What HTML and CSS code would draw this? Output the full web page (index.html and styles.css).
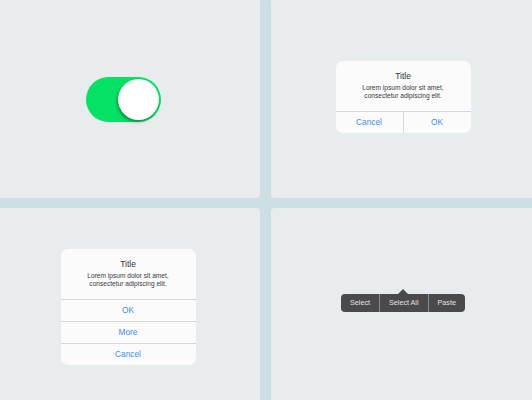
FILE: index.html
```html
<!DOCTYPE html>
<html>
<head>
<meta charset="utf-8">
<link rel="stylesheet" href="styles.css">
</head>
<body>
<div class="board">
  <div class="panel">
    <div class="toggle"><div class="knob"></div></div>
  </div>
  <div class="panel">
    <div class="dialog">
      <div class="dialog-head">
        <div class="dialog-title">Title</div>
        <div class="dialog-body">Lorem ipsum dolor sit amet,<br>consectetur adipiscing elit.</div>
      </div>
      <div class="dialog-row">
        <div class="dialog-btn">Cancel</div>
        <div class="dialog-btn">OK</div>
      </div>
    </div>
  </div>
  <div class="panel">
    <div class="dialog">
      <div class="dialog-head">
        <div class="dialog-title">Title</div>
        <div class="dialog-body">Lorem ipsum dolor sit amet,<br>consectetur adipiscing elit.</div>
      </div>
      <div class="dialog-btn stacked">OK</div>
      <div class="dialog-btn stacked">More</div>
      <div class="dialog-btn stacked">Cancel</div>
    </div>
  </div>
  <div class="panel">
    <div class="menu-wrap">
      <div class="menu-arrow"></div>
      <div class="menu">
        <div class="menu-item">Select</div>
        <div class="menu-item">Select All</div>
        <div class="menu-item">Paste</div>
      </div>
    </div>
  </div>
</div>
</body>
</html>
```
FILE: styles.css
```css
html, body {
  margin: 0;
  padding: 0;
}
body {
  background: #cddfe2;
  overflow: hidden;
  width: 532px;
  height: 400px;
  font-family: "Liberation Sans", Arial, sans-serif;
}
.board {
  display: grid;
  grid-template-columns: 264px 264px;
  grid-template-rows: 200px 200px;
  column-gap: 11px;
  row-gap: 10px;
  margin: -2px 0 0 -4px;
}
.panel {
  background: #e8ecec;
  border-radius: 4px;
  display: flex;
  align-items: center;
  justify-content: center;
}
.toggle {
  width: 75px;
  height: 45px;
  border-radius: 23px;
  background: #03e264;
  box-sizing: border-box;
  padding: 2px;
  display: flex;
  justify-content: flex-end;
  align-items: center;
  margin: 3px 9px 0 0;
}
.knob {
  width: 41px;
  height: 41px;
  border-radius: 50%;
  background: #ffffff;
  box-shadow: -1px 2px 3px rgba(0, 0, 0, 0.35);
}
.dialog {
  width: 135px;
  background: #fbfbfb;
  border-radius: 7px;
  overflow: hidden;
  margin-bottom: 2px;
}
.dialog-head {
  height: 50px;
  box-sizing: border-box;
  padding: 10px 8px 0;
  text-align: center;
}
.dialog-title {
  font-size: 8.5px;
  line-height: 10px;
  font-weight: normal;
  color: #333333;
}
.dialog-body {
  margin-top: 3px;
  font-size: 6.6px;
  line-height: 8px;
  color: #3a3a3a;
}
.dialog-row {
  display: flex;
  border-top: 1px solid #d3d6dc;
}
.dialog-row .dialog-btn {
  flex: 1;
  height: 21px;
}
.dialog-row .dialog-btn + .dialog-btn {
  border-left: 1px solid #d3d6dc;
}
.dialog-btn {
  height: 22px;
  box-sizing: border-box;
  line-height: 21px;
  font-size: 8.3px;
  color: #3d8ff5;
  text-align: center;
}
.dialog-btn.stacked {
  border-top: 1px solid #d3d6dc;
}
.menu-wrap {
  display: flex;
  flex-direction: column;
  align-items: center;
  margin-bottom: 15px;
}
.menu-arrow {
  width: 0;
  height: 0;
  border-left: 5px solid transparent;
  border-right: 5px solid transparent;
  border-bottom: 5px solid #4a4a4c;
}
.menu {
  display: flex;
  background: #4a4a4c;
  border-radius: 4px;
  height: 18px;
}
.menu-item {
  padding: 0 9px;
  line-height: 18px;
  font-size: 7.2px;
  color: #e4e4e4;
}
.menu-item + .menu-item {
  border-left: 1px solid #8c8c8e;
}
```
